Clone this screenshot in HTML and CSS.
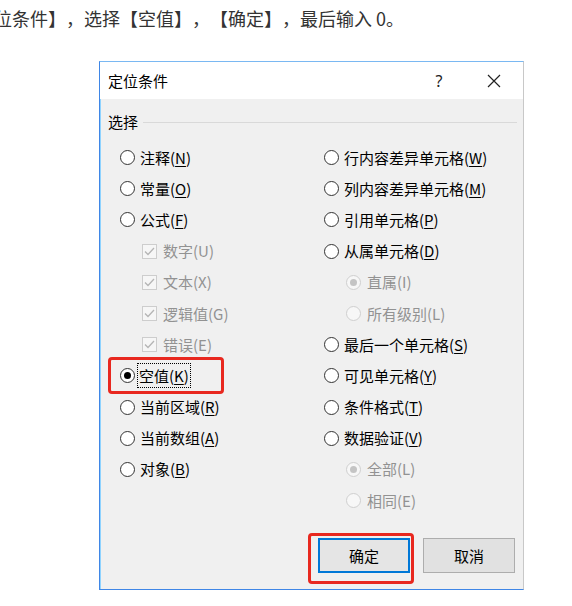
FILE: index.html
```html
<!DOCTYPE html>
<html lang="zh-CN">
<head>
<meta charset="utf-8">
<link rel="stylesheet" href="styles.css">
</head>
<body>
<p class="intro">位条件】，选择【空值】，【确定】，最后输入 0。</p>
<div class="dialog">
  <div class="titlebar">
    <span class="title">定位条件</span>
    <span class="help">?</span>
    <span class="close"><svg width="14" height="14" viewBox="0 0 14 14"><path d="M1 1 L13 13 M13 1 L1 13" stroke="#222" stroke-width="1.2" fill="none"/></svg></span>
  </div>
  <div class="content">
    <div class="group-head"><span class="group-label">选择</span><span class="rule"></span></div>
    <div class="options">
      <div class="col">
        <div class="opt"><span class="radio"></span><span class="lbl">注释(<u>N</u>)</span></div>
        <div class="opt"><span class="radio"></span><span class="lbl">常量(<u>O</u>)</span></div>
        <div class="opt"><span class="radio"></span><span class="lbl">公式(<u>F</u>)</span></div>
        <div class="opt sub disabled"><span class="check"><svg width="13" height="13" viewBox="0 0 13 13"><path d="M2 6.5 L5 9.5 L11 3" stroke="#b5b5b5" stroke-width="1.3" fill="none"/></svg></span><span class="lbl">数字(U)</span></div>
        <div class="opt sub disabled"><span class="check"><svg width="13" height="13" viewBox="0 0 13 13"><path d="M2 6.5 L5 9.5 L11 3" stroke="#b5b5b5" stroke-width="1.3" fill="none"/></svg></span><span class="lbl">文本(X)</span></div>
        <div class="opt sub disabled"><span class="check"><svg width="13" height="13" viewBox="0 0 13 13"><path d="M2 6.5 L5 9.5 L11 3" stroke="#b5b5b5" stroke-width="1.3" fill="none"/></svg></span><span class="lbl">逻辑值(G)</span></div>
        <div class="opt sub disabled"><span class="check"><svg width="13" height="13" viewBox="0 0 13 13"><path d="M2 6.5 L5 9.5 L11 3" stroke="#b5b5b5" stroke-width="1.3" fill="none"/></svg></span><span class="lbl">错误(E)</span></div>
        <div class="opt"><span class="radio checked"></span><span class="lbl focus">空值(<u>K</u>)</span></div>
        <div class="opt"><span class="radio"></span><span class="lbl">当前区域(<u>R</u>)</span></div>
        <div class="opt"><span class="radio"></span><span class="lbl">当前数组(<u>A</u>)</span></div>
        <div class="opt"><span class="radio"></span><span class="lbl">对象(<u>B</u>)</span></div>
      </div>
      <div class="col">
        <div class="opt"><span class="radio"></span><span class="lbl">行内容差异单元格(<u>W</u>)</span></div>
        <div class="opt"><span class="radio"></span><span class="lbl">列内容差异单元格(<u>M</u>)</span></div>
        <div class="opt"><span class="radio"></span><span class="lbl">引用单元格(<u>P</u>)</span></div>
        <div class="opt"><span class="radio"></span><span class="lbl">从属单元格(<u>D</u>)</span></div>
        <div class="opt sub disabled"><span class="radio dis checked"></span><span class="lbl">直属(I)</span></div>
        <div class="opt sub disabled"><span class="radio dis"></span><span class="lbl">所有级别(L)</span></div>
        <div class="opt"><span class="radio"></span><span class="lbl">最后一个单元格(<u>S</u>)</span></div>
        <div class="opt"><span class="radio"></span><span class="lbl">可见单元格(<u>Y</u>)</span></div>
        <div class="opt"><span class="radio"></span><span class="lbl">条件格式(<u>T</u>)</span></div>
        <div class="opt"><span class="radio"></span><span class="lbl">数据验证(<u>V</u>)</span></div>
        <div class="opt sub disabled"><span class="radio dis checked"></span><span class="lbl">全部(L)</span></div>
        <div class="opt sub disabled"><span class="radio dis"></span><span class="lbl">相同(E)</span></div>
      </div>
    </div>
    <div class="buttons">
      <button class="btn default">确定</button>
      <button class="btn">取消</button>
    </div>
  </div>
  <div class="mark mark-empty"></div>
  <div class="mark mark-ok"></div>
</div>
</body>
</html>
```
FILE: styles.css
```css
html, body {
  margin: 0;
  padding: 0;
  background: #fff;
  font-family: "Noto Sans CJK SC", "Noto Sans", sans-serif;
}

.intro {
  margin: 0 0 0 -6px;
  padding-top: 6px;
  font-size: 18px;
  line-height: 24px;
  color: #333;
  white-space: nowrap;
  text-spacing-trim: space-all;
}

.dialog {
  position: relative;
  margin: 31px 0 0 99px;
  width: 425px;
  height: 529px;
  box-sizing: border-box;
  border: 1px solid #3f86e6;
  border-top-color: #7ab8f2;
  border-right-color: #c8c8c8;
  background: #f0f0f0;
  display: flex;
  flex-direction: column;
  box-shadow: inset 1px 0 0 #8fd3ff;
}

.titlebar {
  height: 37px;
  flex: none;
  background: #fff;
  display: flex;
  align-items: center;
  padding-left: 8px;
  font-size: 15px;
  color: #000;
}

.title {
  flex: 1;
}

.help {
  width: 30px;
  text-align: center;
  margin-right: 17px;
  color: #222;
  font-family: "Noto Sans", sans-serif;
  font-size: 16px;
}

.close {
  width: 46px;
  margin-right: 6px;
  display: flex;
  justify-content: center;
  align-items: center;
}

.content {
  flex: 1;
  display: flex;
  flex-direction: column;
  padding: 0 6px 0 0;
}

.group-head {
  margin-top: 13px;
  height: 20px;
  display: flex;
  align-items: center;
  padding-left: 8px;
}

.group-label {
  font-size: 15px;
  color: #000;
  line-height: 20px;
}

.rule {
  flex: 1;
  height: 1px;
  background: #d9d9d9;
  margin-left: 5px;
}

.options {
  margin-top: 10px;
  padding-left: 20px;
  display: flex;
}

.col {
  display: flex;
  flex-direction: column;
}

.col:first-child {
  width: 204px;
}

.opt {
  height: 31.2px;
  display: flex;
  align-items: center;
  gap: 5px;
  font-size: 15px;
  color: #000;
  white-space: nowrap;
}

.opt.sub {
  padding-left: 22px;
  gap: 6px;
}

.opt.disabled .lbl {
  color: #929292;
}

.lbl {
  line-height: 22px;
}

.lbl u {
  text-decoration: underline;
  text-underline-offset: 2px;
}

.lbl.focus {
  outline: 1px dotted #000;
  padding: 0 1px;
  margin-left: -2px;
  line-height: 23px;
}

.radio {
  width: 15px;
  height: 15px;
  box-sizing: border-box;
  border: 1px solid #333;
  border-radius: 50%;
  background: #fff;
  flex: none;
  display: flex;
  align-items: center;
  justify-content: center;
}

.radio.checked::after {
  content: "";
  width: 7px;
  height: 7px;
  border-radius: 50%;
  background: #000;
}

.radio.dis {
  border-color: #cfcfcf;
  background: #f7f7f7;
}

.radio.dis.checked::after {
  background: #c4c4c4;
}

.check {
  width: 15px;
  height: 15px;
  box-sizing: border-box;
  border: 1px solid #cdcdcd;
  background: #f6f6f6;
  flex: none;
  display: flex;
  align-items: center;
  justify-content: center;
}

.buttons {
  margin-top: 22px;
  display: flex;
  justify-content: flex-end;
  gap: 13px;
  padding-right: 2px;
}

.btn {
  width: 92px;
  height: 35px;
  box-sizing: border-box;
  border: 1px solid #adadad;
  background: #e1e1e1;
  font-family: "Noto Sans CJK SC", sans-serif;
  font-size: 15px;
  color: #000;
  padding: 0;
}

.btn.default {
  border: 2px solid #0078d7;
  background: #e5e5e5;
}

.mark {
  position: absolute;
  border: 3px solid #e8281f;
  border-radius: 4px;
  box-sizing: border-box;
}

.mark-empty {
  left: 8px;
  top: 295px;
  width: 116px;
  height: 37px;
}

.mark-ok {
  left: 208px;
  top: 471px;
  width: 106px;
  height: 51px;
}
```
